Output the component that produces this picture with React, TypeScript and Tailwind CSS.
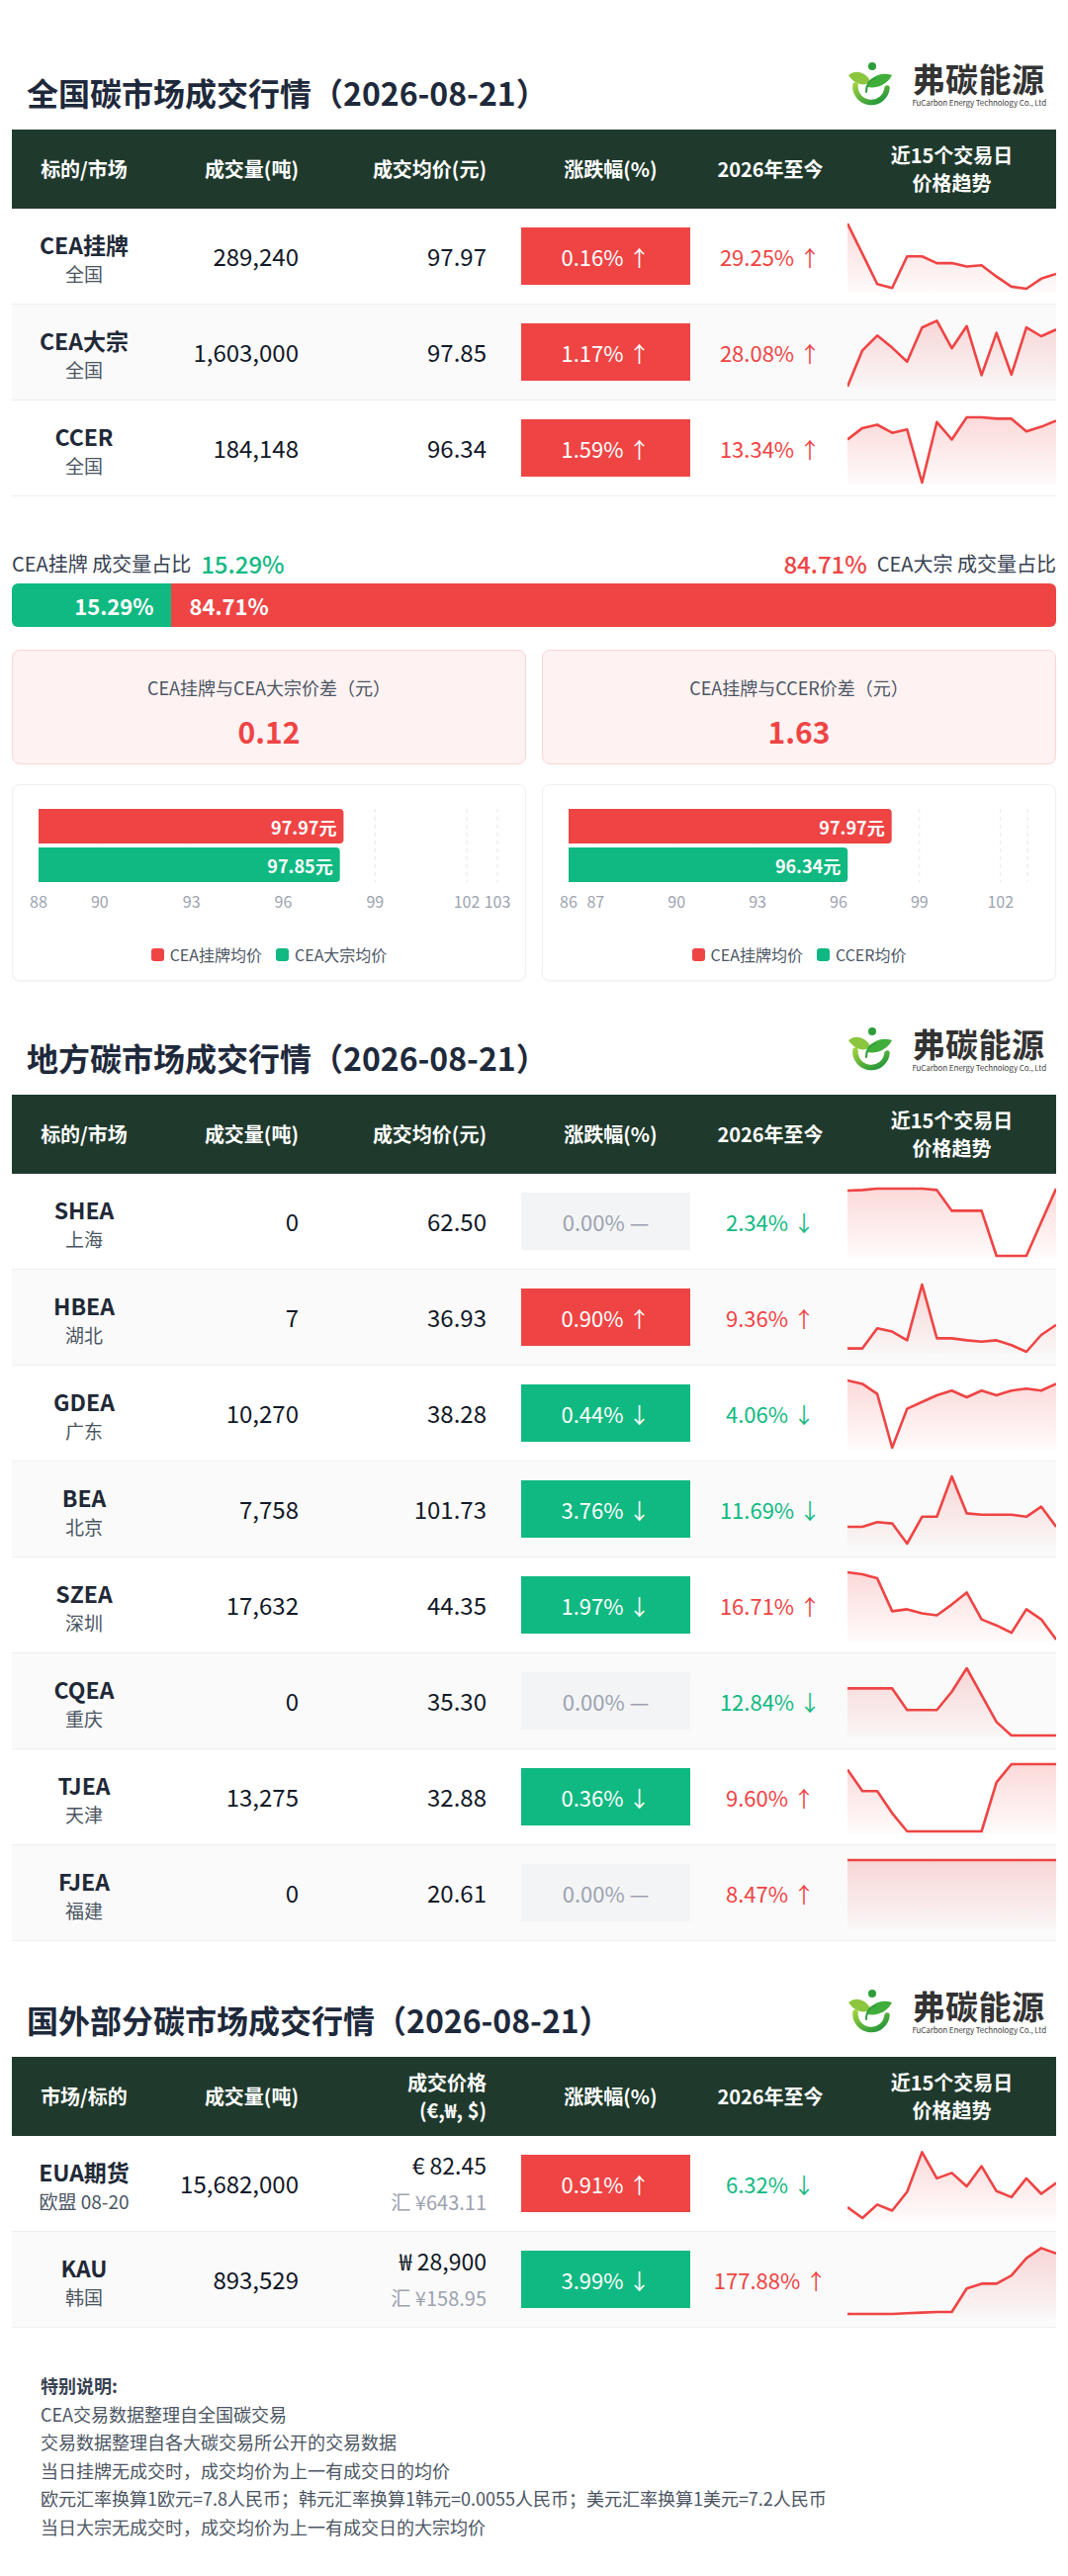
import type { ReactNode } from 'react'

type Tone = 'up' | 'down' | 'flat'

interface Row {
  name: string
  sub: string
  vol: string
  price: string
  priceSub?: string
  change: string
  changeTone: Tone
  ytd: string
  ytdTone: 'up' | 'down'
  spark: number[]
}

const national: Row[] = [
  { name: 'CEA挂牌', sub: '全国', vol: '289,240', price: '97.97', change: '0.16%', changeTone: 'up', ytd: '29.25%', ytdTone: 'up', spark: [0, 0.45, 0.9, 0.96, 0.49, 0.49, 0.59, 0.59, 0.64, 0.62, 0.79, 0.94, 0.97, 0.82, 0.75] },
  { name: 'CEA大宗', sub: '全国', vol: '1,603,000', price: '97.85', change: '1.17%', changeTone: 'up', ytd: '28.08%', ytdTone: 'up', spark: [1, 0.46, 0.24, 0.42, 0.63, 0.12, 0.02, 0.43, 0.1, 0.83, 0.2, 0.82, 0.12, 0.25, 0.15] },
  { name: 'CCER', sub: '全国', vol: '184,148', price: '96.34', change: '1.59%', changeTone: 'up', ytd: '13.34%', ytdTone: 'up', spark: [0.36, 0.19, 0.14, 0.26, 0.21, 1, 0.1, 0.36, 0.03, 0.03, 0.05, 0.05, 0.24, 0.17, 0.08] },
]

const local: Row[] = [
  { name: 'SHEA', sub: '上海', vol: '0', price: '62.50', change: '0.00%', changeTone: 'flat', ytd: '2.34%', ytdTone: 'down', spark: [0.03, 0.02, 0, 0, 0, 0, 0.02, 0.33, 0.33, 0.33, 1, 1, 1, 0.5, 0] },
  { name: 'HBEA', sub: '湖北', vol: '7', price: '36.93', change: '0.90%', changeTone: 'up', ytd: '9.36%', ytdTone: 'up', spark: [0.95, 0.95, 0.65, 0.7, 0.83, 0, 0.8, 0.8, 0.83, 0.85, 0.83, 0.9, 1, 0.75, 0.6] },
  { name: 'GDEA', sub: '广东', vol: '10,270', price: '38.28', change: '0.44%', changeTone: 'down', ytd: '4.06%', ytdTone: 'down', spark: [0, 0.05, 0.2, 1, 0.42, 0.32, 0.22, 0.15, 0.25, 0.15, 0.22, 0.15, 0.12, 0.15, 0.05] },
  { name: 'BEA', sub: '北京', vol: '7,758', price: '101.73', change: '3.76%', changeTone: 'down', ytd: '11.69%', ytdTone: 'down', spark: [0.75, 0.75, 0.68, 0.7, 1, 0.6, 0.6, 0, 0.55, 0.57, 0.57, 0.57, 0.6, 0.45, 0.75] },
  { name: 'SZEA', sub: '深圳', vol: '17,632', price: '44.35', change: '1.97%', changeTone: 'down', ytd: '16.71%', ytdTone: 'up', spark: [0, 0.03, 0.09, 0.58, 0.55, 0.61, 0.64, 0.48, 0.3, 0.7, 0.79, 0.9, 0.55, 0.7, 1] },
  { name: 'CQEA', sub: '重庆', vol: '0', price: '35.30', change: '0.00%', changeTone: 'flat', ytd: '12.84%', ytdTone: 'down', spark: [0.3, 0.3, 0.3, 0.3, 0.62, 0.62, 0.62, 0.35, 0, 0.4, 0.8, 1, 1, 1, 1] },
  { name: 'TJEA', sub: '天津', vol: '13,275', price: '32.88', change: '0.36%', changeTone: 'down', ytd: '9.60%', ytdTone: 'up', spark: [0.08, 0.4, 0.4, 0.73, 1, 1, 1, 1, 1, 1, 0.27, 0, 0, 0, 0] },
  { name: 'FJEA', sub: '福建', vol: '0', price: '20.61', change: '0.00%', changeTone: 'flat', ytd: '8.47%', ytdTone: 'up', spark: [0, 0, 0, 0, 0, 0, 0, 0, 0, 0, 0, 0, 0, 0, 0] },
]

const foreign: Row[] = [
  { name: 'EUA期货', sub: '欧盟 08-20', vol: '15,682,000', price: '€ 82.45', priceSub: '汇 ¥643.11', change: '0.91%', changeTone: 'up', ytd: '6.32%', ytdTone: 'down', spark: [0.84, 1, 0.8, 0.89, 0.61, 0.02, 0.41, 0.33, 0.53, 0.23, 0.6, 0.69, 0.41, 0.64, 0.48] },
  { name: 'KAU', sub: '韩国', vol: '893,529', price: '₩ 28,900', priceSub: '汇 ¥158.95', change: '3.99%', changeTone: 'down', ytd: '177.88%', ytdTone: 'up', spark: [1, 1, 1, 1, 0.99, 0.98, 0.97, 0.97, 0.62, 0.55, 0.55, 0.43, 0.17, 0.02, 0.1] },
]

const cols = 'grid grid-cols-[146px_160px_190px_209px_124px_227px]'

function Logo({ id }: { id: string }) {
  return (
    <div className="mr-[10px] flex h-[48px] items-center gap-[20px]">
      <svg viewBox="0 0 44 48" className="h-[48px] w-[44px]">
        <defs>
          <linearGradient id={id} x1="0" y1="0" x2="1" y2="1">
            <stop offset="0" stopColor="#9ccf3e" />
            <stop offset="1" stopColor="#17923a" />
          </linearGradient>
        </defs>
        <path d="M7 24 A16 16 0 1 0 39 27" fill="none" stroke={`url(#${id})`} strokeWidth="5.5" strokeLinecap="round" />
        <path d="M23 21 C17 10 7 8 0 14 C6 23 15 26 23 21 Z" fill="#8cc63f" />
        <path d="M19 26 C22 15 33 10 44 14 C39 24 28 28 19 26 Z" fill="#3fae3a" />
        <path d="M18 31 C18 23 21 19 27 17" fill="none" stroke="#2e9e3a" strokeWidth="2" strokeLinecap="round" />
        <circle cx="24" cy="5" r="4" fill="#2e9e3a" />
      </svg>
      <div className="flex flex-col">
        <span className="text-[33px] font-bold leading-[32px] tracking-[0.5px] text-[#333333]">弗碳能源</span>
        <span className="mt-[3px] text-[8px] leading-[12px] tracking-[-0.1px] text-[#444444]">FuCarbon Energy Technology Co., Ltd</span>
      </div>
    </div>
  )
}

function SectionHeader({ id, title }: { id: string; title: string }) {
  return (
    <div className="flex h-[69px] items-start justify-between">
      <h2 className="mt-[15px] pl-[15px] text-[32px] font-bold leading-[32px] text-[#1e293b]">{title}</h2>
      <Logo id={`logo-${id}`} />
    </div>
  )
}

function Sparkline({ id, values }: { id: string; values: number[] }) {
  const w = 211
  const h = 72
  const step = w / (values.length - 1)
  const line = values
    .map((v, i) => `${i ? 'L' : 'M'}${(i * step).toFixed(1)} ${(2 + v * 68).toFixed(1)}`)
    .join(' ')
  const area = `${line} L${w} ${h} L0 ${h} Z`
  return (
    <svg viewBox={`0 0 ${w} ${h}`} className="block h-[72px] w-[211px]" preserveAspectRatio="none">
      <defs>
        <linearGradient id={id} x1="0" y1="0" x2="0" y2="1">
          <stop offset="0" stopColor="#ef4444" stopOpacity="0.2" />
          <stop offset="1" stopColor="#ef4444" stopOpacity="0.02" />
        </linearGradient>
      </defs>
      <path d={area} fill={`url(#${id})`} />
      <path d={line} fill="none" stroke="#ef4444" strokeWidth="2.6" strokeLinejoin="round" />
    </svg>
  )
}

function ChangeBadge({ text, tone }: { text: string; tone: Tone }) {
  if (tone === 'flat') {
    return <div className="flex h-[58px] items-center justify-center bg-[#f3f4f6] text-[22px] text-[#9ca3af]">{text} —</div>
  }
  return (
    <div className={`flex h-[58px] items-center justify-center text-[22px] text-white ${tone === 'up' ? 'bg-[#ef4444]' : 'bg-[#10b981]'}`}>
      {text} {tone === 'up' ? '↑' : '↓'}
    </div>
  )
}

function MarketTable({ id, rows, first, priceHead }: { id: string; rows: Row[]; first: string; priceHead: ReactNode }) {
  return (
    <div>
      <div className={`${cols} h-[80px] items-center bg-[#1f3a2d] text-[20px] font-bold leading-[28px] text-white`}>
        <div className="text-center">{first}</div>
        <div className="pr-[16px] text-right">成交量(吨)</div>
        <div className="pr-[16px] text-right">{priceHead}</div>
        <div className="pl-[10px] text-center">涨跌幅(%)</div>
        <div className="text-center">2026年至今</div>
        <div className="pl-[16px] text-center">
          近15个交易日
          <br />
          价格趋势
        </div>
      </div>
      {rows.map((row, i) => (
        <div key={row.name} className={`${cols} h-[97px] items-center border-b border-[#efefef] ${i % 2 === 1 ? 'bg-[#fafafa]' : 'bg-white'}`}>
          <div className="flex flex-col items-center pt-[6px]">
            <span className="text-[23px] font-bold leading-[30px] text-[#1f2937]">{row.name}</span>
            <span className="text-[19px] leading-[30px] text-[#4b5563]">{row.sub}</span>
          </div>
          <div className="pr-[16px] text-right text-[24px] text-[#111827]">{row.vol}</div>
          {row.priceSub ? (
            <div className="flex flex-col items-end pr-[16px]">
              <span className="text-[23px] leading-[34px] text-[#111827]">{row.price}</span>
              <span className="mt-[4px] text-[20px] leading-[34px] text-[#9ca3af]">{row.priceSub}</span>
            </div>
          ) : (
            <div className="pr-[16px] text-right text-[24px] text-[#111827]">{row.price}</div>
          )}
          <div className="px-[19px]">
            <ChangeBadge text={row.change} tone={row.changeTone} />
          </div>
          <div className={`text-center text-[22px] ${row.ytdTone === 'up' ? 'text-[#ef4444]' : 'text-[#10b981]'}`}>
            {row.ytd} {row.ytdTone === 'up' ? '↑' : '↓'}
          </div>
          <div className="flex h-full items-start pl-[16px] pt-[13px]">
            <Sparkline id={`${id}-${i}`} values={row.spark} />
          </div>
        </div>
      ))}
    </div>
  )
}

interface Bar {
  value: number
  color: string
}

function PriceBars({ min, max, ticks, labels, bars, legend }: { min: number; max: number; ticks: number[]; labels: number[]; bars: Bar[]; legend: string[] }) {
  const x0 = 26
  const x1 = 490
  const sx = (v: number) => x0 + ((v - min) / (max - min)) * (x1 - x0)
  const barPath = (xe: number, y: number, h: number) => {
    const r = 4
    return `M${x0} ${y} H${xe - r} Q${xe} ${y} ${xe} ${y + r} V${y + h - r} Q${xe} ${y + h} ${xe - r} ${y + h} H${x0} Z`
  }
  return (
    <div className="h-[199px] rounded-[8px] border border-[#f0f0f0] bg-white shadow-[0_1px_3px_rgba(0,0,0,0.04)]">
      <svg viewBox="0 0 518 140" className="block h-[140px] w-[518px]">
        {ticks.map((t) => (
          <line key={t} x1={sx(t)} x2={sx(t)} y1={24} y2={98} stroke="#e5e7eb" strokeDasharray="4 4" />
        ))}
        {bars.map((b, i) => {
          const y = 24 + i * 39
          const xe = sx(b.value)
          return (
            <g key={i}>
              <path d={barPath(xe, y, 35)} fill={b.color} />
              <text x={xe - 7} y={y + 18} textAnchor="end" dominantBaseline="central" fill="#ffffff" fontSize="18" fontWeight="700">
                {b.value.toFixed(2)}元
              </text>
            </g>
          )
        })}
        {labels.map((t) => (
          <text key={t} x={sx(t)} y={117} textAnchor="middle" dominantBaseline="central" fill="#9ca3af" fontSize="16">
            {t}
          </text>
        ))}
      </svg>
      <div className="mt-[21px] flex h-[20px] items-center justify-center gap-[14px] text-[16px] text-[#4b5563]">
        <div className="flex items-center gap-[6px]">
          <span className="h-[13px] w-[13px] rounded-[3px] bg-[#ef4444]" />
          {legend[0]}
        </div>
        <div className="flex items-center gap-[6px]">
          <span className="h-[13px] w-[13px] rounded-[3px] bg-[#10b981]" />
          {legend[1]}
        </div>
      </div>
    </div>
  )
}

function DiffCard({ label, value }: { label: string; value: string }) {
  return (
    <div className="flex h-[116px] flex-col items-center rounded-[8px] border border-[#fbd5d5] bg-[#fef2f2] pt-[25px]">
      <span className="text-[18px] leading-[24px] text-[#4b5563]">{label}</span>
      <span className="mt-[14px] text-[30px] font-bold leading-[36px] text-[#ef4444]">{value}</span>
    </div>
  )
}

export default function App() {
  const listedPct = 15.29
  return (
    <div className="w-[1080px] bg-white px-[12px] pb-[36px] pt-[62px] font-['Noto_Sans_CJK_SC','Noto_Sans',sans-serif]">
      <SectionHeader id="nat" title="全国碳市场成交行情（2026-08-21）" />
      <MarketTable id="nat" rows={national} first="标的/市场" priceHead="成交均价(元)" />

      <div className="mt-[54px] flex h-[28px] items-center justify-between">
        <div className="flex items-center gap-[10px]">
          <span className="text-[20px] text-[#374151]">CEA挂牌 成交量占比</span>
          <span className="text-[24px] font-medium text-[#10b981]">15.29%</span>
        </div>
        <div className="flex items-center gap-[10px]">
          <span className="text-[24px] font-medium text-[#ef4444]">84.71%</span>
          <span className="text-[20px] text-[#374151]">CEA大宗 成交量占比</span>
        </div>
      </div>
      <div className="mt-[6px] flex h-[44px] overflow-hidden rounded-[6px] text-[22px] font-bold text-white">
        <div className="flex items-center justify-end bg-[#10b981] pr-[18px]" style={{ width: `${listedPct}%` }}>
          15.29%
        </div>
        <div className="flex flex-1 items-center bg-[#ef4444] pl-[18px]">84.71%</div>
      </div>

      <div className="mt-[23px] grid grid-cols-2 gap-[16px]">
        <DiffCard label="CEA挂牌与CEA大宗价差（元）" value="0.12" />
        <DiffCard label="CEA挂牌与CCER价差（元）" value="1.63" />
      </div>

      <div className="mt-[20px] grid grid-cols-2 gap-[16px]">
        <PriceBars
          min={88}
          max={103}
          ticks={[90, 93, 96, 99, 102, 103]}
          labels={[88, 90, 93, 96, 99, 102, 103]}
          bars={[
            { value: 97.97, color: '#ef4444' },
            { value: 97.85, color: '#10b981' },
          ]}
          legend={['CEA挂牌均价', 'CEA大宗均价']}
        />
        <PriceBars
          min={86}
          max={103}
          ticks={[87, 90, 93, 96, 99, 102, 103]}
          labels={[86, 87, 90, 93, 96, 99, 102]}
          bars={[
            { value: 97.97, color: '#ef4444' },
            { value: 96.34, color: '#10b981' },
          ]}
          legend={['CEA挂牌均价', 'CCER均价']}
        />
      </div>

      <div className="mt-[46px]">
        <SectionHeader id="loc" title="地方碳市场成交行情（2026-08-21）" />
        <MarketTable id="loc" rows={local} first="标的/市场" priceHead="成交均价(元)" />
      </div>

      <div className="mt-[48px]">
        <SectionHeader id="for" title="国外部分碳市场成交行情（2026-08-21）" />
        <MarketTable
          id="for"
          rows={foreign}
          first="市场/标的"
          priceHead={
            <>
              成交价格
              <br />
              (€,₩, $)
            </>
          }
        />
      </div>

      <div className="mt-[44px] pl-[29px] text-[18px] leading-[28.5px] text-[#4b5563]">
        <p className="font-bold text-[#374151]">特别说明:</p>
        <p>CEA交易数据整理自全国碳交易</p>
        <p>交易数据整理自各大碳交易所公开的交易数据</p>
        <p>当日挂牌无成交时，成交均价为上一有成交日的均价</p>
        <p>欧元汇率换算1欧元=7.8人民币；韩元汇率换算1韩元=0.0055人民币；美元汇率换算1美元=7.2人民币</p>
        <p>当日大宗无成交时，成交均价为上一有成交日的大宗均价</p>
      </div>
    </div>
  )
}
